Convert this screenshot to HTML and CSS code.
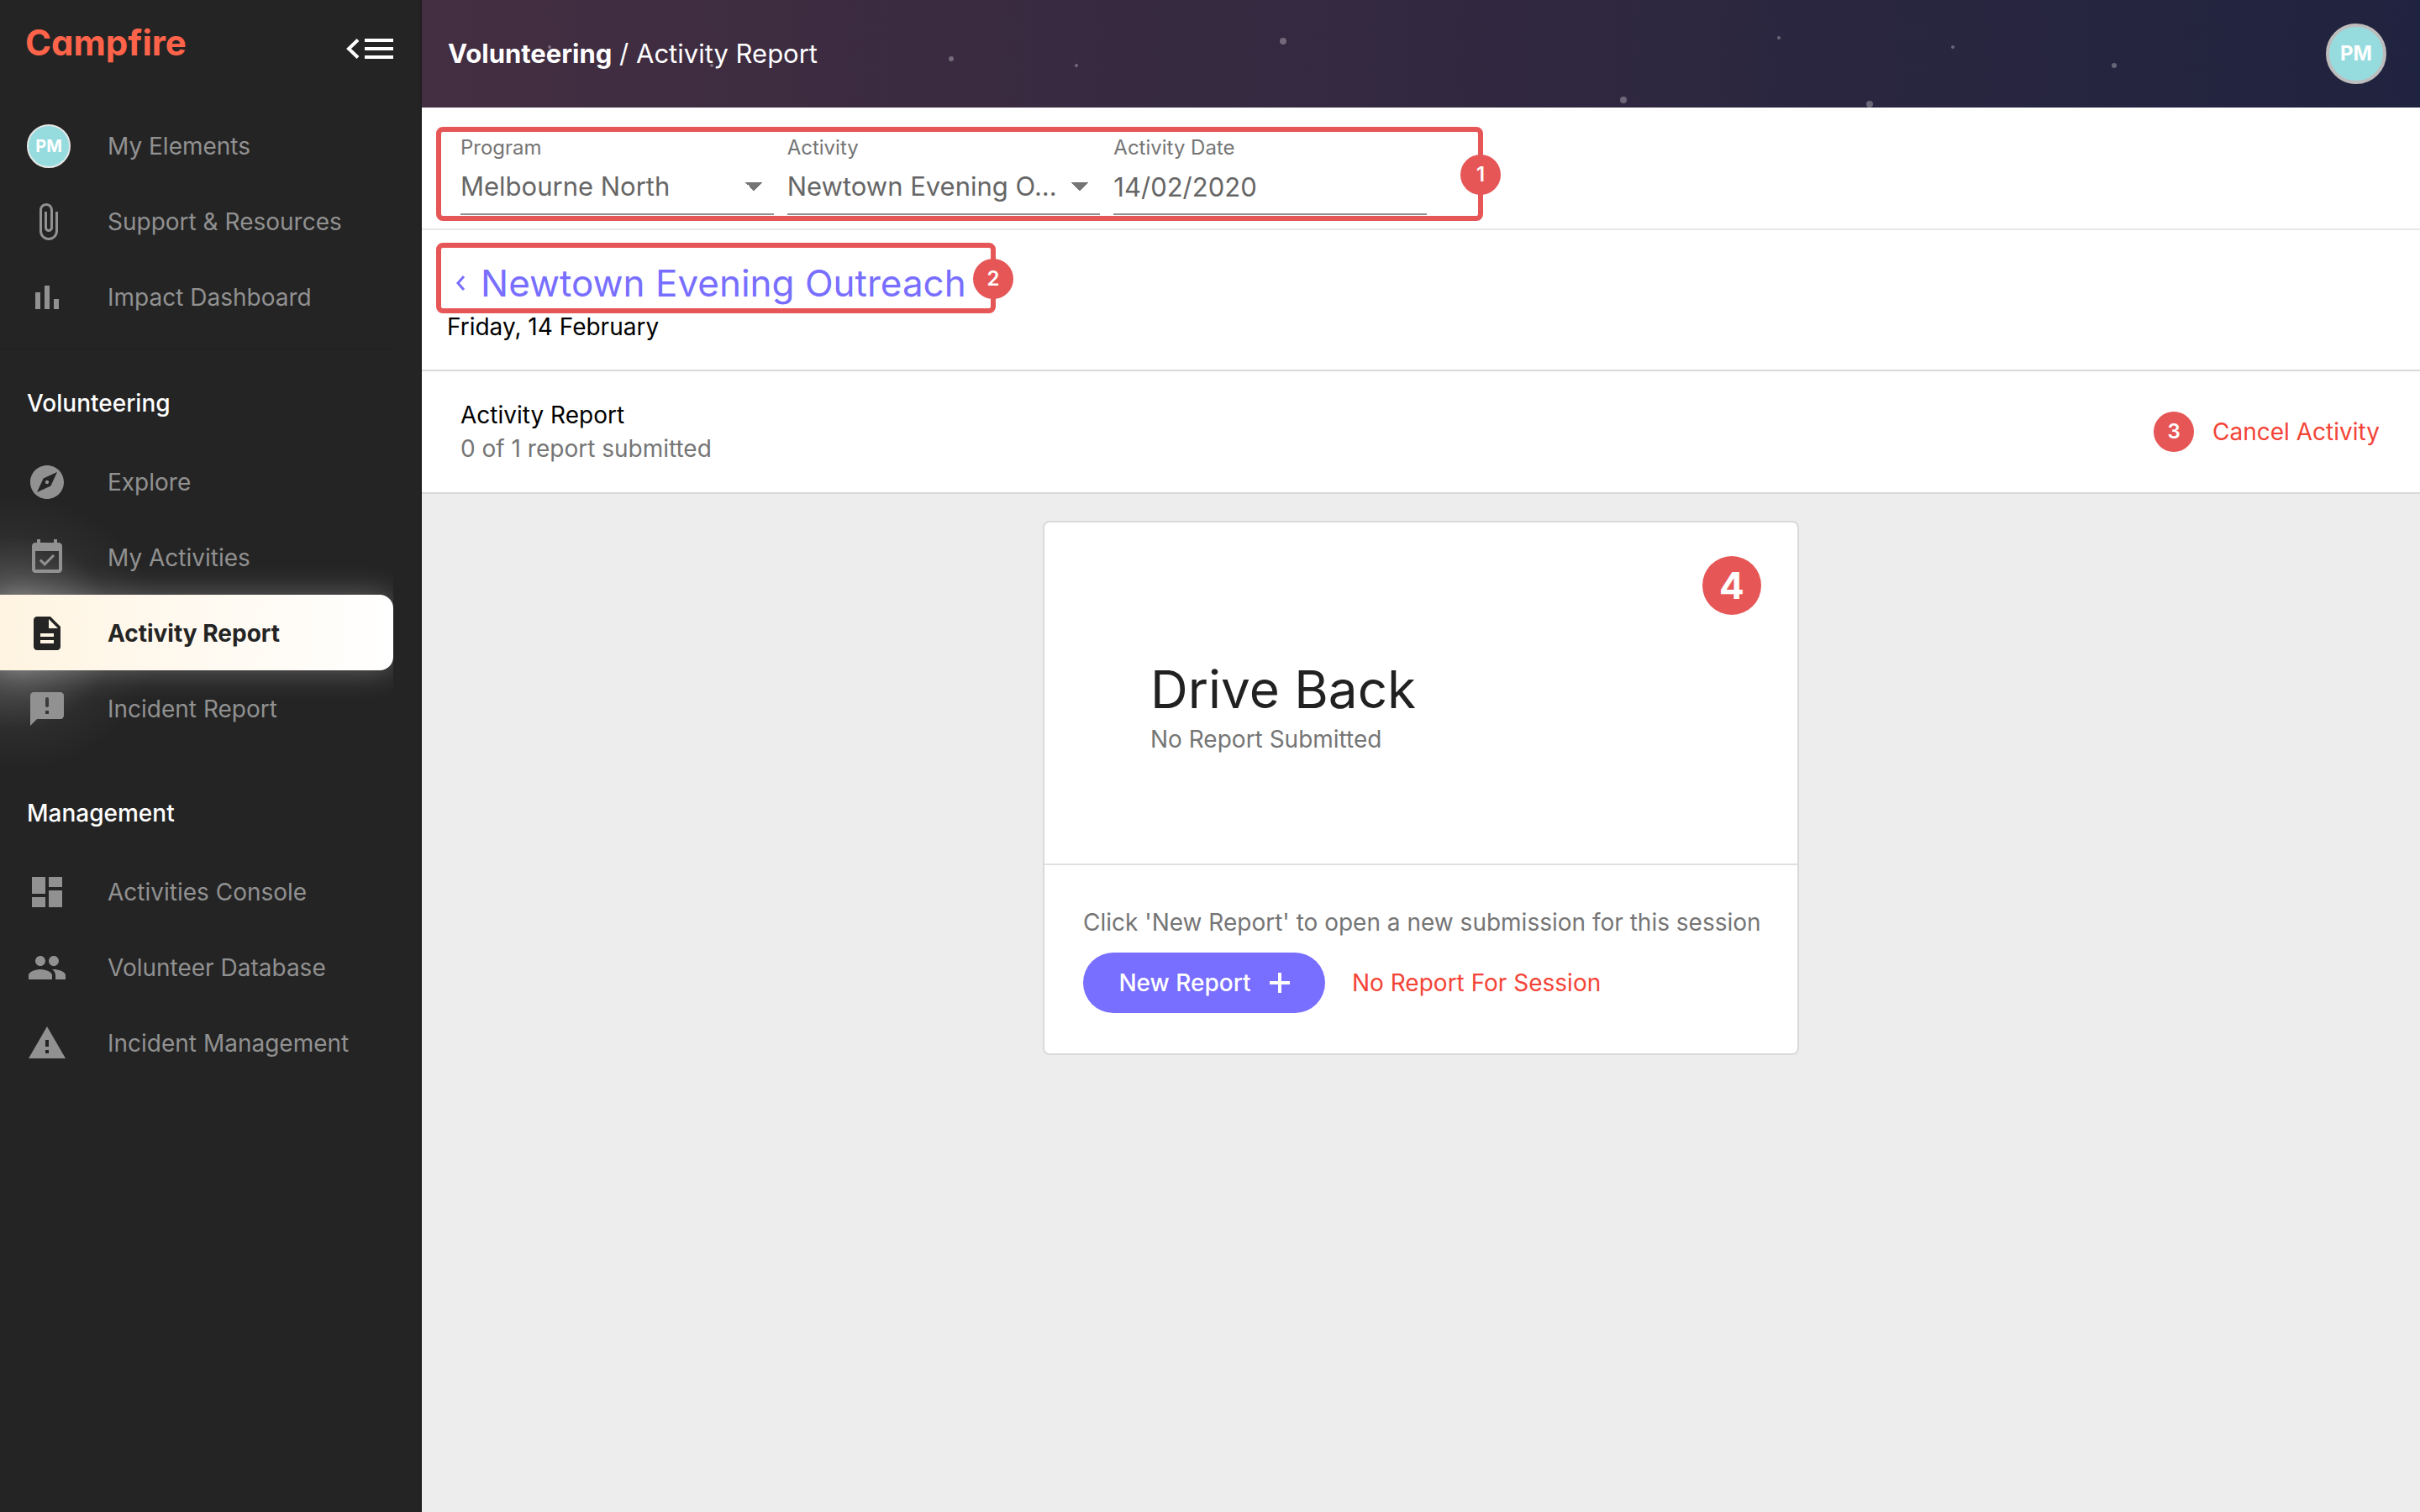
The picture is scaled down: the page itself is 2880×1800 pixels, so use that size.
FILE: index.html
```html
<!DOCTYPE html>
<html lang="en">
<head>
<meta charset="utf-8">
<title>Activity Report – Campfire</title>
<link rel="stylesheet" href="styles.css">
</head>
<body>
<aside class="sidebar">
  <div class="brand-row">
    <a class="brand" href="#">Campfire</a>
    <button class="collapse" type="button" aria-label="Collapse menu">
      <svg width="56" height="24" viewBox="0 0 56 24"><path d="M14 1.500 3 12l11 10.500" fill="none" stroke="#fff" stroke-width="4"/><path d="M22 0h34v4H22zM22 10h34v4H22zM22 20h34v4H22z" fill="#fff"/></svg>
    </button>
  </div>
  <nav class="nav">
    <ul class="nav-list">
      <li><a class="nav-item" href="#"><span class="nav-icon"><span class="avatar avatar-small">PM</span></span>My Elements</a></li>
      <li><a class="nav-item" href="#"><span class="nav-icon"><svg class="icon" viewBox="0 0 24 24"><path d="M17 6v11.500c0 2.210-1.790 4-4 4s-4-1.790-4-4V5c0-1.380 1.120-2.500 2.500-2.500s2.500 1.120 2.500 2.500v10.500c0 .55-.45 1-1 1s-1-.45-1-1V6h-1.500v9.500c0 1.380 1.120 2.500 2.500 2.500s2.500-1.120 2.500-2.500V5c0-2.210-1.790-4-4-4S7.500 2.790 7.500 5v12.500c0 3.040 2.460 5.500 5.500 5.500s5.500-2.460 5.500-5.500V6H17z"/></svg></span>Support &amp; Resources</a></li>
      <li><a class="nav-item" href="#"><span class="nav-icon"><svg class="icon" viewBox="0 0 24 24"><path d="M5 9h3v10H5zM10.500 5h3v14h-3zM16 13h3v6h-3z"/></svg></span>Impact Dashboard</a></li>
    </ul>
    <hr class="nav-rule">
    <h2 class="nav-heading">Volunteering</h2>
    <ul class="nav-list">
      <li><a class="nav-item" href="#"><span class="nav-icon"><svg class="icon" viewBox="0 0 24 24"><path d="M12 10.900c-.61 0-1.100.49-1.100 1.100s.49 1.100 1.100 1.100 1.100-.49 1.100-1.100-.49-1.100-1.100-1.100zM12 2C6.480 2 2 6.480 2 12s4.480 10 10 10 10-4.480 10-10S17.520 2 12 2zm2.190 12.190L6 18l3.810-8.190L18 6l-3.810 8.190z"/></svg></span>Explore</a></li>
      <li><a class="nav-item" href="#"><span class="nav-icon"><svg class="icon" viewBox="0 0 24 24"><path d="M16.530 11.060l-1.060-1.060-4.880 4.880-2.120-2.120-1.060 1.060L10.590 17l5.940-5.940zM19 3h-1V1h-2v2H8V1H6v2H5c-1.110 0-1.990.9-1.990 2L3 19c0 1.100.89 2 2 2h14c1.100 0 2-.9 2-2V5c0-1.100-.9-2-2-2zm0 16H5V8h14v11z"/></svg></span>My Activities</a></li>
      <li><a class="nav-item is-active" href="#" aria-current="page"><span class="nav-icon"><svg class="icon" viewBox="0 0 24 24"><path d="M14 2H6c-1.100 0-1.990.9-1.990 2L4 20c0 1.100.89 2 1.990 2H18c1.100 0 2-.9 2-2V8l-6-6zm2 16H8v-2h8v2zm0-4H8v-2h8v2zm-3-5V3.500L18.500 9H13z"/></svg></span>Activity Report</a></li>
      <li><a class="nav-item" href="#"><span class="nav-icon"><svg class="icon" viewBox="0 0 24 24"><path fill-rule="evenodd" d="M20 2H4c-1.100 0-1.990.9-1.990 2L2 22l4-4h14c1.100 0 2-.9 2-2V4c0-1.100-.9-2-2-2zm-7 13h-2v-2h2v2zm0-5a1 1 0 0 1-2 0V6a1 1 0 0 1 2 0z"/></svg></span>Incident Report</a></li>
    </ul>
    <h2 class="nav-heading">Management</h2>
    <ul class="nav-list">
      <li><a class="nav-item" href="#"><span class="nav-icon"><svg class="icon" viewBox="0 0 24 24"><path d="M3 13h8V3H3v10zm0 8h8v-6H3v6zm10 0h8V11h-8v10zm0-18v6h8V3h-8z"/></svg></span>Activities Console</a></li>
      <li><a class="nav-item" href="#"><span class="nav-icon"><svg class="icon" viewBox="0 0 24 24"><path d="M16 11c1.660 0 2.990-1.340 2.990-3S17.660 5 16 5s-3 1.340-3 3 1.340 3 3 3zm-8 0c1.660 0 2.990-1.340 2.990-3S9.660 5 8 5 5 6.340 5 8s1.340 3 3 3zm0 2c-2.330 0-7 1.170-7 3.500V19h14v-2.500c0-2.330-4.670-3.500-7-3.500zm8 0c-.29 0-.62.020-.97.050 1.160.84 1.970 1.970 1.970 3.450V19h6v-2.500c0-2.330-4.670-3.500-7-3.500z"/></svg></span>Volunteer Database</a></li>
      <li><a class="nav-item" href="#"><span class="nav-icon"><svg class="icon" viewBox="0 0 24 24"><path d="M1 21h22L12 2 1 21zm12-3h-2v-2h2v2zm0-4h-2v-4h2v4z"/></svg></span>Incident Management</a></li>
    </ul>
  </nav>
</aside>

<div class="page">
  <header class="topbar">
    <svg class="stars" width="100%" height="100%" aria-hidden="true">
      <g fill="#fff" fill-opacity=".3">
        <circle cx="152" cy="56" r="2"/><circle cx="345" cy="78" r="2"/><circle cx="630" cy="70" r="3"/><circle cx="779" cy="78" r="2"/><circle cx="1025" cy="49" r="4"/><circle cx="1430" cy="119" r="4"/><circle cx="1615" cy="45" r="2"/><circle cx="1723" cy="124" r="4"/><circle cx="1822" cy="56" r="2"/><circle cx="2014" cy="78" r="3"/>
      </g>
    </svg>
    <div class="breadcrumb"><a href="#">Volunteering</a> / Activity Report</div>
    <button class="avatar avatar-large" type="button" aria-label="Account">PM</button>
  </header>

  <main class="main">
    <form class="filters">
      <div class="callout callout-filters">
        <div class="field">
          <label for="program">Program</label>
          <select id="program"><option>Melbourne North</option></select>
        </div>
        <div class="field">
          <label for="activity">Activity</label>
          <select id="activity"><option>Newtown Evening O...</option></select>
        </div>
        <div class="field">
          <label for="date">Activity Date</label>
          <input id="date" type="text" value="14/02/2020">
        </div>
        <span class="marker marker-edge">1</span>
      </div>
    </form>

    <section class="title-panel">
      <div class="callout callout-title">
        <a class="back" href="#"><svg width="12" height="18" viewBox="0 0 12 18"><path d="M10 1 3 9l7 8" fill="none" stroke="currentColor" stroke-width="3"/></svg><h1>Newtown Evening Outreach</h1></a>
        <span class="marker marker-edge">2</span>
      </div>
      <p class="title-date">Friday, 14 February</p>
    </section>

    <section class="summary">
      <div>
        <h2>Activity Report</h2>
        <p class="muted">0 of 1 report submitted</p>
      </div>
      <div class="summary-actions">
        <span class="marker">3</span>
        <button class="text-button" type="button">Cancel Activity</button>
      </div>
    </section>

    <article class="card">
      <div class="card-head">
        <span class="marker marker-big">4</span>
        <h2>Drive Back</h2>
        <p class="muted">No Report Submitted</p>
      </div>
      <div class="card-foot">
        <p class="muted">Click 'New Report' to open a new submission for this session</p>
        <div class="card-actions">
          <button class="primary-button" type="button">New Report
            <svg width="24" height="24" viewBox="0 0 24 24"><path d="M12 0v24M0 12h24" stroke="#fff" stroke-width="4"/></svg>
          </button>
          <button class="text-button" type="button">No Report For Session</button>
        </div>
      </div>
    </article>
  </main>
</div>
</body>
</html>
```
FILE: styles.css
```css
*,
*::before {
  box-sizing: border-box;
}

body {
  display: flex;
  min-height: 100vh;
  margin: 0;
  background: #ededed;
  color: #000;
  font: 28px/40px Inter, "Liberation Sans", sans-serif;
}

h1, h2, p, ul {
  margin: 0;
  padding: 0;
  font-size: inherit;
  font-weight: 400;
}

ul {
  list-style: none;
}

a {
  color: inherit;
  text-decoration: none;
}

button, input, select {
  margin: 0;
  padding: 0;
  border: 0;
  background: none;
  color: inherit;
  font: inherit;
}

svg {
  display: block;
}

/* Sidebar */

.sidebar {
  flex: 0 0 502px;
  padding-right: 32px;
  border-right: 2px solid #1f1f1f;
  background: #242424;
}

.brand-row {
  display: flex;
  justify-content: space-between;
  align-items: flex-start;
  height: 128px;
  padding: 26px 0 0 30px;
}

.brand {
  color: #ff644b;
  font-size: 42px;
  font-weight: 700;
  line-height: 50px;
  font-feature-settings: "cv11";
}

.collapse {
  padding: 20px 0;
}

.nav {
  position: relative;
  z-index: 0;
  overflow: hidden;
}

.nav-list {
  margin-bottom: 16px;
}

.nav-item {
  display: flex;
  align-items: center;
  position: relative;
  height: 90px;
  padding: 2px 0 0 32px;
  color: #919191;
}

.nav-icon {
  flex: 0 0 96px;
}

.icon {
  width: 48px;
  height: 48px;
  fill: currentColor;
}

.nav-item.is-active {
  border-radius: 0 16px 16px 0;
  background: linear-gradient(90deg, #fff4e1, #fff);
  box-shadow: 0 0 36px rgba(255, 255, 255, .3);
  color: #242424;
  font-weight: 700;
}

/* Soft light spilling from the left edge of the selected item */
.is-active::before {
  content: "";
  position: absolute;
  z-index: -1;
  top: -120px;
  left: -160px;
  width: 350px;
  height: 330px;
  background: radial-gradient(closest-side, rgba(255, 255, 255, .45), rgba(255, 255, 255, .2) 35%, rgba(255, 255, 255, .04) 70%, transparent);
}

.nav-rule {
  height: 2px;
  margin: 0;
  border: 0;
  background: #202020;
}

.nav-heading {
  padding: 44px 0 28px 32px;
  color: #fff;
  font-weight: 500;
}

.avatar {
  display: flex;
  align-items: center;
  justify-content: center;
  border-radius: 50%;
  background: #96dcde;
  color: #fff;
  font-weight: 700;
}

.avatar-small {
  width: 52px;
  height: 52px;
  border: 2px solid #e8e8e8;
  font-size: 20px;
}

.avatar-large {
  position: relative;
  width: 72px;
  height: 72px;
  border: 4px solid #bdbdbd;
  font-size: 24px;
}

/* Top bar */

.page {
  flex: 1;
  min-width: 0;
}

.topbar {
  display: flex;
  align-items: center;
  justify-content: space-between;
  position: relative;
  height: 128px;
  padding: 0 40px 0 31px;
  background: linear-gradient(90deg, #442e41, #20233f);
}

.stars {
  position: absolute;
  inset: 0;
}

.breadcrumb {
  position: relative;
  color: #fff;
  font-size: 31px;
}

.breadcrumb a {
  font-weight: 700;
}

/* Numbered callouts */

.callout {
  position: relative;
  border: 6px solid #e65656;
  border-radius: 8px;
}

.marker {
  display: flex;
  flex: none;
  align-items: center;
  justify-content: center;
  width: 48px;
  height: 48px;
  border-radius: 50%;
  background: #e65656;
  color: #fff;
  font-size: 24px;
  font-weight: 600;
}

.marker-edge {
  position: absolute;
  top: calc(50% - 23px);
  right: -27px;
}

.marker-big {
  position: absolute;
  top: 40px;
  right: 43px;
  width: 70px;
  height: 70px;
  font-size: 44px;
  font-weight: 700;
}

/* Filters */

.filters {
  padding: 23px 17px 9px;
  border-bottom: 2px solid #e8e8e8;
  background: #fff;
}

.callout-filters {
  display: grid;
  grid-template-columns: repeat(3, 1fr);
  gap: 16px;
  max-width: 1246px;
  padding: 5px 61px 1px 23px;
}

.field {
  display: flex;
  flex-direction: column;
  color: #666;
}

.field label {
  color: #757575;
  font-size: 24px;
  line-height: 28px;
}

.field input,
.field select {
  width: 100%;
  height: 66px;
  border-bottom: 2px solid #919191;
  border-radius: 0;
  font-size: 31px;
}

.field select {
  appearance: none;
  background: conic-gradient(from -45deg at 50% 100%, #757575 90deg, transparent 0) right 14px center / 20px 10px no-repeat;
}

/* Title */

.title-panel {
  padding: 15px 17px 35px;
  border-bottom: 2px solid #d9d9d9;
  background: #fff;
}

.callout-title {
  max-width: 666px;
  padding: 12px 0 0 17px;
}

.back {
  display: flex;
  align-items: center;
  gap: 18px;
  color: #786eff;
}

.back h1 {
  font-size: 44px;
  line-height: 60px;
  white-space: nowrap;
}

.title-date {
  padding-left: 13px;
  line-height: 32px;
}

/* Report summary */

.summary {
  display: flex;
  align-items: center;
  justify-content: space-between;
  padding: 32px 48px 32px 46px;
  border-bottom: 2px solid #d9d9d9;
  background: #fff;
}

.summary-actions {
  display: flex;
  align-items: center;
  gap: 22px;
}

.muted {
  color: #757575;
}

.text-button {
  color: #f44336;
}

/* Session card */

.card {
  max-width: 900px;
  margin: 32px auto;
  border: 2px solid #dadada;
  border-radius: 8px;
  background: #fff;
}

.card-head {
  position: relative;
  padding: 160px 126px 128px;
  border-bottom: 2px solid #e0e0e0;
}

.card-head h2 {
  color: #212121;
  font-size: 62px;
  line-height: 78px;
}

.card-foot {
  display: flex;
  flex-direction: column;
  gap: 16px;
  padding: 48px 0 48px 46px;
}

.card-actions {
  display: flex;
  align-items: center;
  gap: 32px;
}

.primary-button {
  display: flex;
  align-items: center;
  justify-content: center;
  gap: 22px;
  width: 288px;
  height: 72px;
  border-radius: 36px;
  background: #786eff;
  color: #fff;
  font-weight: 500;
}
```
